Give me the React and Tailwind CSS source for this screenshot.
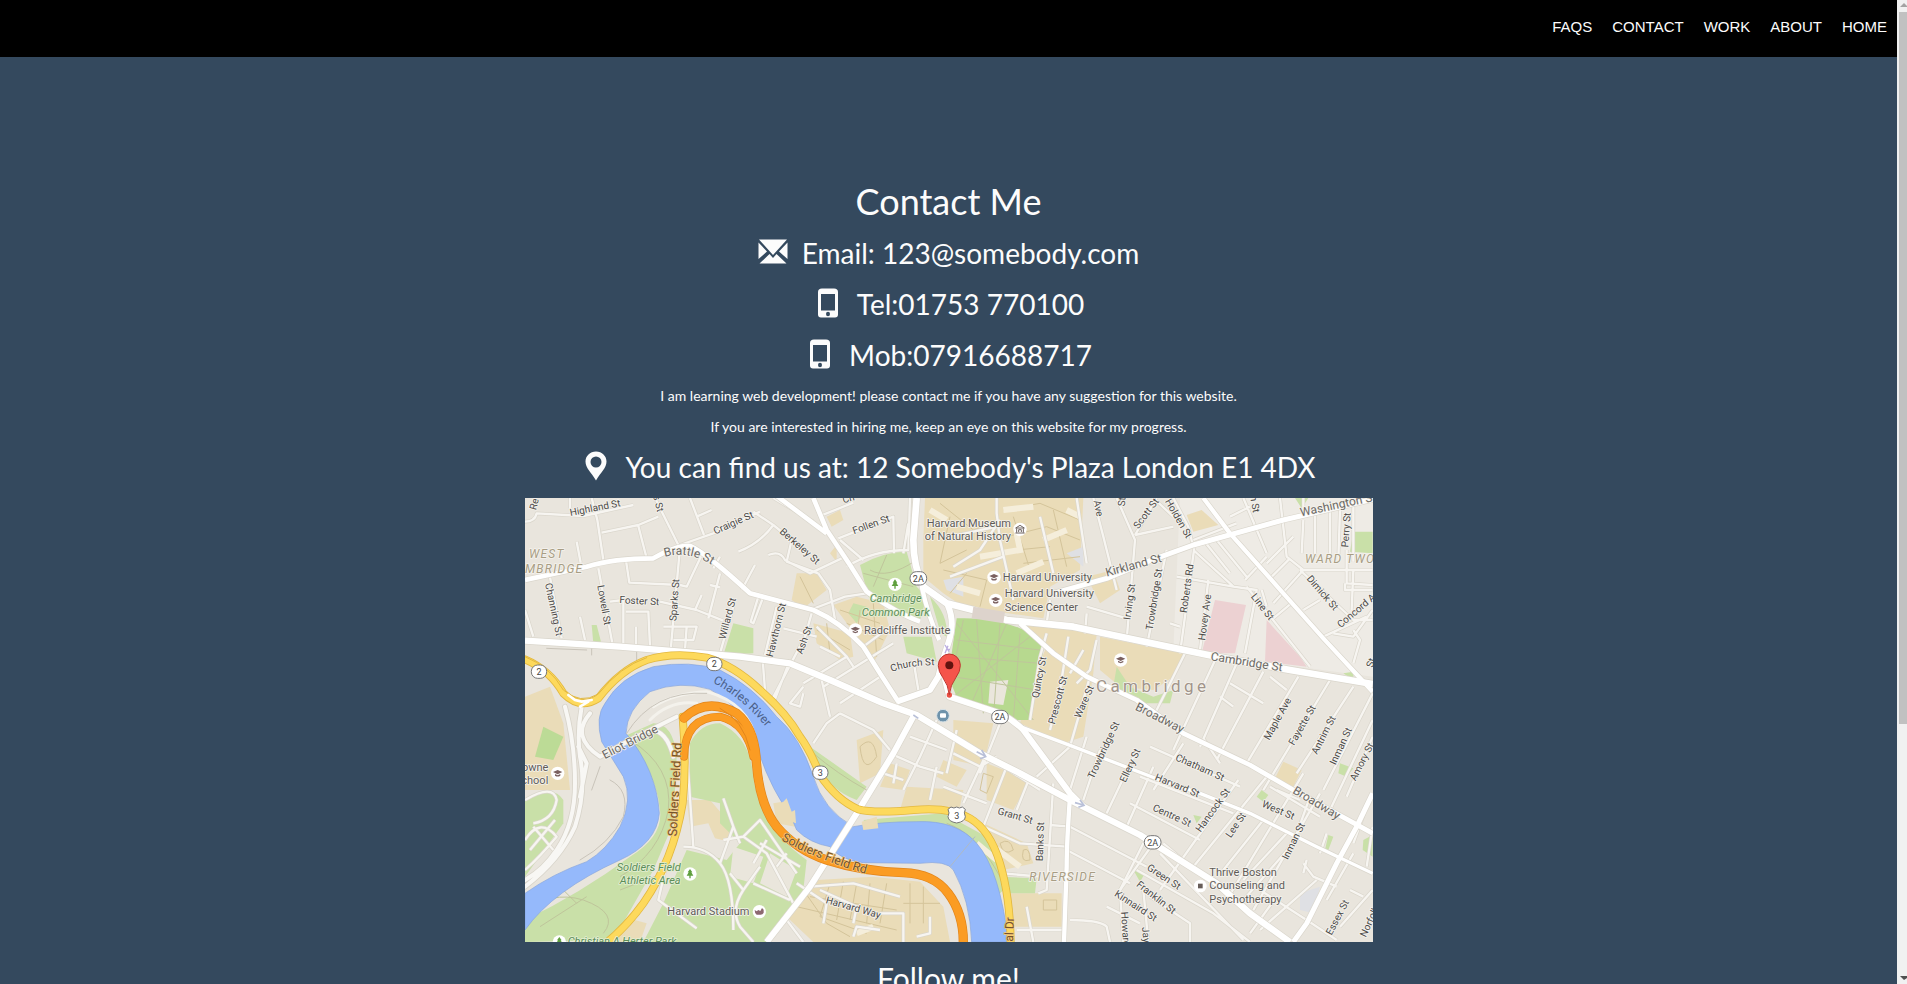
import React from "react";

const navItems = ["FAQS", "CONTACT", "WORK", "ABOUT", "HOME"];

const TAN = "#eadcb8";
const GREEN = "#c9e0a8";

function Envelope() {
  return (
    <svg viewBox="0 0 30 30" className="h-[30px] w-[30px] shrink-0 fill-[#fcfcfc]" aria-hidden="true">
      <path d="M1 2.500H29L15 18ZM0.500 5.500L9 14.500L0.500 22ZM29.500 5.500L21 14.500L29.500 22ZM11.500 17L15 21L18.500 17L28.500 26.500H1.500Z" />
    </svg>
  );
}

function Phone() {
  return (
    <svg viewBox="0 0 30 30" className="h-[30px] w-[30px] shrink-0 fill-[#fcfcfc]" aria-hidden="true">
      <path
        fillRule="evenodd"
        d="M9 0.500H21Q25 0.500 25 4V26.500Q25 29.500 22 29.500H8Q5 29.500 5 26.500V4Q5 0.500 9 0.500ZM8 6V22.500H22V6ZM15 23.800A2 2.200 0 1 0 15 28.200A2 2.200 0 1 0 15 23.800Z"
      />
    </svg>
  );
}

function Marker() {
  return (
    <svg viewBox="0 0 30 30" className="h-[30px] w-[30px] shrink-0 fill-[#fcfcfc]" aria-hidden="true">
      <path
        fillRule="evenodd"
        d="M15 0.500C21 0.500 25.500 5 25.500 10.500C25.500 17 20 21 15 29.500C10 21 4.500 17 4.500 10.500C4.500 5 9 0.500 15 0.500ZM15 5.500A5.500 5.500 0 1 0 15 16.500A5.500 5.500 0 1 0 15 5.500Z"
      />
    </svg>
  );
}

/* Street and place labels: [text, x, y, angle, size] around their centre. */
const streets = [
  ["Re", 42, 42, -75, 30],
  ["Highland St", 225, 53, -11, 30],
  ["s St", 416, 40, 75, 30],
  ["Craigie St", 640, 98, -24, 30],
  ["Channing St", 102, 358, 78, 30],
  ["Lowell St", 253, 345, 80, 30],
  ["Foster St", 358, 332, 3, 30],
  ["Sparks St", 463, 330, -86, 30],
  ["Willard St", 622, 385, -75, 30],
  ["Ch", 985, 25, -15, 30],
  ["Berkeley St", 840, 168, 41, 30],
  ["Follen St", 1053, 103, -20, 30],
  ["Hawthorn St", 768, 420, -76, 30],
  ["Ash St", 852, 450, -70, 30],
  ["Ave", 1736, 55, 78, 30],
  ["St", 1805, 35, -85, 30],
  ["Scott St", 1878, 70, -53, 30],
  ["Irving St", 1828, 335, -82, 30],
  ["Trowbridge St", 1902, 328, -81, 30],
  ["Quincy St", 1557, 562, -79, 30],
  ["Prescott St", 1613, 630, -75, 30],
  ["Ware St", 1692, 635, -66, 30],
  ["Holden St", 1976, 85, 60, 30],
  ["n St", 2205, 42, 80, 30],
  ["Perry St", 2478, 120, -86, 30],
  ["Dimick St", 2408, 308, 49, 30],
  ["Concord Ave", 2520, 352, -40, 30],
  ["Roberts Rd", 2000, 295, -82, 30],
  ["Hovey Ave", 2054, 382, -82, 30],
  ["Line St", 2228, 350, 52, 30],
  ["Maple Ave", 2272, 686, -61, 30],
  ["Fayette St", 2346, 705, -60, 30],
  ["Antrim St", 2410, 735, -63, 30],
  ["Inman St", 2462, 768, -65, 30],
  ["Amory St", 2525, 815, -63, 30],
  ["St", 2552, 518, -75, 30],
  ["Harvard Way", 1000, 1252, 16, 30],
  ["Grant St", 1486, 977, 16, 30],
  ["Banks St", 1560, 1055, -88, 30],
  ["Trowbridge St", 1750, 780, -65, 30],
  ["Ellery St", 1830, 826, -65, 30],
  ["Kinnaird St", 1848, 1247, 33, 30],
  ["Howard St", 1818, 1335, 86, 30],
  ["Jay St", 1880, 1352, 85, 30],
  ["Green St", 1932, 1160, 33, 30],
  ["Franklin St", 1909, 1222, 38, 30],
  ["Chatham St", 2040, 832, 24, 30],
  ["Harvard St", 1972, 886, 22, 30],
  ["Centre St", 1956, 976, 24, 30],
  ["Hancock St", 2078, 960, -54, 30],
  ["Lee St", 2147, 1005, -56, 30],
  ["West St", 2275, 960, 23, 30],
  ["Inman St", 2320, 1053, -64, 30],
  ["Essex St", 2452, 1282, -62, 30],
  ["Norfolk St", 2556, 1278, -65, 30],
];

const avenues = [
  ["Kirkland St", 1840, 225, -15, 36],
  ["Washington St", 2454, 43, -12, 36],
  ["Cambridge St", 2180, 515, 9, 36],
  ["Broadway", 1920, 683, 27, 36],
  ["Broadway", 2390, 938, 31, 36],
  ["Eliot Bridge", 330, 755, -27, 36],
];

/* Landmark names: [text, x, y, anchor]. */
const places = [
  ["Harvard Museum", 1473, 100, "end"],
  ["of Natural History", 1473, 139, "end"],
  ["Harvard University", 1448, 263, "start"],
  ["Harvard University", 1454, 311, "start"],
  ["Science Center", 1454, 351, "start"],
  ["Radcliffe Institute", 1032, 421, "start"],
  ["owne", 85, 832, "end"],
  ["chool", 85, 871, "end"],
  ["Harvard Stadium", 442, 1264, "start"],
  ["Thrive Boston", 2068, 1147, "start"],
  ["Counseling and", 2068, 1187, "start"],
  ["Psychotherapy", 2068, 1227, "start"],
];

const parks = [
  ["Cambridge", 1127, 325, "middle"],
  ["Common Park", 1127, 366, "middle"],
  ["Soldiers Field", 482, 1132, "end"],
  ["Athletic Area", 482, 1172, "end"],
  ["Christian A Herter Park", 143, 1354, "start"],
];

const minorRoads = [
  // north-west
  "M15 95 Q45 95 50 70 L190 78 L340 45 M150 24 V55 M215 24 L232 90 L250 210 M245 128 L355 105 L415 80 M355 108 L380 205 M405 24 L475 165 M510 24 L552 135 M530 80 L575 60 M480 165 L580 130 L720 65",
  "M170 155 L182 218 M235 235 L278 465 M90 262 L125 445 M15 360 L40 440 M180 380 L195 450 M318 212 L328 278 L480 285 L500 290 L545 195 M478 195 L452 480 M270 335 L310 330 L310 465 M318 365 H385 L390 470 M348 410 V465 M420 335 L530 360 L610 392 M430 410 H530 L520 450 H460 M500 410 L495 480",
  "M600 250 L565 385 M570 285 L600 292 M525 360 L545 315 M640 350 L600 490 M600 200 L580 235 M705 225 L665 300 M730 320 L700 400 L692 395 L715 320",
  "M700 65 L760 105 Q720 160 655 185 M760 105 L815 150 L800 215 L895 250 M745 195 Q780 180 795 210 L870 250 L965 205 M895 250 L930 300 L945 390",
  "M880 95 L760 24 M895 80 L1000 38 M955 145 L1120 80 L1122 190 M960 150 L1030 210 M980 230 Q1060 180 1165 180 L1170 24 M1165 100 L1150 190",
  "M870 360 L975 320 L1040 310 M875 370 L855 440 L750 640 M735 495 L770 350 M728 510 L735 600 M790 415 L890 440 M890 410 L980 500 L850 580 M900 470 L960 500 M810 510 L760 640 M850 590 L810 640 L840 650 L850 610 M905 570 L930 680 M980 500 L1000 530 M910 590 L1120 460 M960 640 L1080 560 M1180 510 L1195 600 M1030 470 L1110 410",
  // Harvard campus
  "M1430 24 V70 L1440 150 L1480 330 M1560 80 L1600 250 M1670 24 L1700 220 M1590 330 L1580 400 M1300 230 L1380 180 L1440 90 M1290 260 L1450 200 M1290 140 L1430 110",
  "M1720 24 L1750 140 L1790 300 M1790 24 L1845 150 L1820 450 M1845 135 L1910 24 M1845 135 L1960 110 M1700 350 L1820 385 M1700 370 L1695 430 M1900 24 L1960 80 M1940 180 L1880 470",
  "M1580 430 L1560 500 L1530 690 M1645 440 L1620 600 L1590 720 M1730 450 L1710 540 L1670 580 M1650 550 L1690 480 M1710 560 L1650 770 L1550 860",
  "M1960 24 L2005 110 L2022 180 L1980 490 M2020 150 L2150 100 M2020 180 L2130 280 L2140 290 L1970 260 M2050 150 L2130 250 M2090 150 L2180 260 M2065 270 L2040 480 M1950 400 L1980 410 M2140 290 L2210 300 L2175 490 M2180 290 L2370 530 M2175 270 L2240 200 M2225 300 L2240 350 M2170 24 L2240 190 M2190 50 L2130 80 M2280 24 L2300 200 L2350 240 L2260 340 M2240 220 L2320 140 M2310 205 L2250 265 M2340 240 H2558 M2350 24 V60 M2350 90 L2345 190 M2385 70 V200 M2430 60 V210 M2460 60 L2455 210 M2500 50 V215",
  "M2340 240 L2500 390 L2558 390 M2260 385 L2320 335 M2480 180 V280 L2558 285 M2475 280 V300 H2558 M2500 240 L2495 360 M2540 380 L2410 440 M2350 360 L2400 330 M2500 420 L2520 450 L2500 520 M2558 360 L2500 440 L2440 430",
  // east of the square
  "M1995 490 L1900 680 M2090 500 L1960 780 M2150 520 L2040 770 M2230 545 L2090 810 M2335 560 L2180 820 M2430 570 L2230 900 M2500 590 L2330 850 M2558 610 L2410 900 M2130 580 L2230 640 M2250 560 L2300 600 M2100 620 L2140 650 M1990 760 L1900 900 M2050 745 L2100 820 M2558 690 L2430 960 M2558 740 L2480 920",
  "M1890 770 L2160 890 M1860 860 L2140 970 M1830 940 L2040 1050 M2155 870 L1920 1200 M2240 860 L2020 1130 M2350 850 L2120 1230 M2370 920 L2320 1060 L2170 1230 M2230 990 L2110 1140 M2300 1030 L2170 1170 M2400 910 L2200 1260 M2350 1120 L2380 1160 L2450 1190 M2360 1110 L2350 1150 M2420 1030 L2400 1090 M2250 890 L2400 980 M2270 900 L2340 930 M2390 1170 L2220 1320 M2500 1090 L2420 1230 M2558 1010 L2540 1130 M2220 1200 L2360 1290 L2450 1350 M2460 1310 L2558 1200 M2490 1200 L2530 1220 M2500 1060 L2540 950",
  "M1900 1060 L1800 1200 M1920 1090 L2170 1350 M1850 1140 L2080 1270 L2190 1356 M1890 1220 L2010 1300 L2010 1356 M1760 1250 L1860 1300 M2190 1330 L2270 1220 M1930 1060 L2060 1170 M1650 1010 L1880 1130 M1640 1080 L1830 1180 M1590 1005 L1650 1010 M1650 1290 Q1740 1290 1760 1310 L1770 1356 M1800 1200 L1810 1356 M1870 1200 L1885 1356",
  // riverside
  "M1600 880 L1580 1200 L1555 1210 M1530 860 L1490 960 M1460 830 L1390 1010 M1450 830 L1560 900 M1400 790 L1330 940 M1310 720 L1280 850 M1440 700 L1380 850 M1300 790 L1380 830 L1430 800 M1390 1010 L1500 1060 L1640 1070 M1270 890 L1400 940 M1450 1150 L1560 1160 M1490 1320 H1640 M1520 1250 L1540 1356 M1700 740 L1650 900 M1740 780 L1690 930 M1850 780 L1760 970 M1900 830 L1820 1010 M1870 1060 L1800 1200",
  "M960 670 L920 700 L880 760 M960 670 L1060 720 L1110 780 M1250 690 L1200 800 L1150 900 M1170 740 L1280 780 M1110 790 L1200 830 L1270 850 M1090 850 L1150 870 M1130 820 L1120 880 M1250 830 L1230 930",
  // south-west
  "M15 1140 Q60 1100 110 1040 Q60 980 15 1050 M15 930 Q100 880 110 930 Q100 990 40 1000 M40 1010 L100 1080 M105 990 L30 1080",
  "M500 780 L520 1070 M610 925 L640 1010 L600 1120 M490 1070 Q560 1070 600 1120 Q640 1170 640 1320 M640 1010 L660 1060 M450 1080 L415 1230 L530 1315",
  "M610 1050 L670 1040 L720 990 L830 1150 M670 1040 L740 1090 L820 1240 M740 1050 L700 1120 M800 1090 L770 1130 M720 1060 L840 1130 M630 1150 L670 1200 L720 1130 M670 1200 Q630 1260 660 1310 L700 1356 M700 1180 L810 1230",
  "M830 1180 L920 1240 L910 1300 M900 1200 L1010 1250 L1000 1300 M870 1190 L1000 1180 L1140 1220 M800 1290 L850 1356 M1080 1270 H1150 V1356 M1230 1280 V1330 L1190 1340 M1000 1340 L1010 1310 L1080 1320",
];

const majorRoads = [
  ["M15 270 L200 230 Q280 205 400 205 Q470 165 510 168 Q560 190 690 310 L880 360 Q960 395 1030 470 L1080 550 L1135 635", 14],
  ["M760 10 L920 130 M880 24 L920 120 L990 225 L1040 305 Q1130 370 1200 395", 14],
  ["M1600 310 L1760 265 L1890 212 L2020 165 L2290 90 L2558 28", 15],
  ["M2050 24 L2130 130 L2290 310 L2410 445 L2558 605", 13],
  ["M1500 400 L1600 490 L1700 560 L1850 630 L1990 730 L2190 825 L2320 900 L2558 1030", 14],
  ["M1500 710 L1660 770 L1920 870 L2040 910 L2190 970 L2390 1070 L2558 1150", 10],
  ["M2558 910 L2510 1010 L2450 1120 L2360 1300 L2320 1356", 15],
  ["M1650 920 Q1640 1060 1640 1130 L1632 1356", 13],
  ["M1180 680 L1120 790 L1010 970 L870 1190 L740 1356", 18],
  ["M15 452 L300 470 L660 500 L810 520 L930 570 L1090 640 L1190 675 L1290 735 L1380 790 L1500 850 L1650 930 L1860 1035 L2090 1180 L2190 1270 L2310 1356", 19],
  ["M1190 24 L1180 150 Q1180 230 1210 290 L1280 340 L1360 360 L1460 390 L1660 410 L1920 465 L2090 500 L2310 540 L2558 582", 20],
  ["M1205 290 Q1225 380 1258 450", 13],
  ["M1283 345 Q1305 395 1288 450 Q1265 520 1255 560 L1230 600 L1130 635 M1268 540 L1288 620 L1440 670 Q1480 690 1510 720 L1650 910 L1690 950", 18],
];

const paths = {
  yellow:
    "M15 508 Q90 540 130 610 Q180 660 235 625 Q300 540 380 510 Q460 485 560 503 Q640 525 720 600 Q800 670 840 740 Q870 780 900 855 Q950 930 1015 958 Q1060 970 1180 960 Q1290 950 1350 985 Q1410 1020 1440 1120 Q1470 1220 1472 1356",
  yellowSouth: "M488 680 Q500 820 488 940 Q460 1110 370 1240 Q320 1310 255 1362",
  orange:
    "M492 684 Q560 620 650 670 Q700 710 708 800 Q715 940 770 1010 Q830 1080 920 1110 Q1030 1145 1150 1148 Q1240 1150 1285 1210 Q1330 1270 1330 1356",
  orangeLoop: "M492 800 Q495 680 600 680 Q680 700 700 800",
};

function Shield({ x, y, label }) {
  const w = label.length > 1 ? 50 : 46;
  return (
    <g>
      <rect x={x - w / 2} y={y - 20} width={w} height={40} rx={19} fill="#fff" stroke="#777" strokeWidth={3} />
      <text x={x} y={y + 10} fontSize={27} fill="#444" textAnchor="middle">{label}</text>
    </g>
  );
}

function School({ x, y }) {
  return (
    <g transform={`translate(${x} ${y})`}>
      <circle r={20} fill="#fff" />
      <path d="M-14 -4L0 -10L14 -4L0 3ZM-8 2L0 6L8 2V7Q0 12 -8 7ZM11 -2V8" fill="#7b6160" />
    </g>
  );
}

function Tree({ x, y }) {
  return (
    <g transform={`translate(${x} ${y})`}>
      <circle r={20} fill="#fff" />
      <path d="M0 -15L7 -5H4L10 5H2V13H-2V5H-10L-4 -5H-7Z" fill="#5f9f3e" />
    </g>
  );
}

function Label({ item }) {
  const [text, x, y, angle, size] = item;
  return (
    <text transform={`translate(${x} ${y}) rotate(${angle})`} y={size * 0.35} fontSize={size} textAnchor="middle">
      {text}
    </text>
  );
}

function CityMap() {
  return (
    <svg
      viewBox="15 24 2544 1332"
      role="img"
      aria-label="Map of Cambridge"
      className="mt-3.5 block h-auto w-[848px] max-w-full font-['Roboto',sans-serif]"
    >
      <defs>
        <path id="brattle" d="M434 201 Q505 180 578 226" />
        <path id="charles" d="M578 578 Q680 630 765 745" />
        <path id="church" d="M1116 546 Q1165 525 1245 526" />
        <path id="soldiers" d="M783 1050 Q900 1115 1075 1162" />
      </defs>

      <rect x={15} y={24} width={2544} height={1332} fill="#e9e5dd" />
      <path d="M1980 24H2559V560L1960 480Z" fill="#eeebe5" />

      {/* campus grounds */}
      <g fill={TAN}>
        <path d="M1215 24H1690L1680 240L1590 290L1570 385L1330 350L1270 310L1210 260V150Z" />
        <path d="M1510 400L1730 430L1720 550L1690 740L1630 760L1500 700L1540 560L1580 470Z" />
        <path d="M1740 440L1990 490L1960 560L1900 600L1800 590L1740 540Z" />
        <path d="M1700 260L1780 240L1800 300L1740 340Z" />
        <path d="M830 250L890 250L920 300L850 355L815 330ZM940 345L1010 320L1090 340L1110 420L1060 520L1010 440ZM880 400L990 430L1000 500L960 510L890 460ZM920 80L960 60L970 90L935 110ZM930 190L950 165V215Z" />
        <path d="M15 620L90 590L130 700L150 900H15Z" />
        <path d="M2000 75L2045 60L2095 105L2020 125ZM2290 815L2345 840L2320 890L2265 865Z" />
        <path d="M500 930H570L630 1000V1055L585 1045L565 1000L510 1010Z" />
        <path d="M325 1285L380 1300L360 1356H290Z" />
        <path d="M890 1170L1060 1160L1200 1175L1270 1250L1290 1356H880L800 1280Z" />
        <path d="M1010 750L1090 720L1080 850L1020 880ZM1160 890L1330 900L1320 950L1140 960ZM1110 820L1170 840L1150 900L1080 890ZM1300 690L1420 700L1390 830L1300 810ZM1270 810L1340 840L1310 890L1250 860ZM1400 820L1530 870L1480 960L1400 930ZM1390 1000L1520 1060L1540 1120L1450 1140ZM1460 1210H1625V1310H1470Z" />
        <path d="M760 940L820 930L825 1010L770 1000Z" />
      </g>

      {/* parks */}
      <g fill={GREEN}>
        <path d="M1020 225Q1090 185 1160 185L1190 290L1220 320L1200 390L1130 370L1045 320Z" />
        <path d="M1310 385Q1460 380 1545 440L1570 480L1530 690L1460 690L1310 620L1285 560Z" fill="#b7d98f" />
        <path d="M1230 320Q1285 370 1280 440L1262 430ZM1150 440H1235L1250 515L1160 490ZM1000 340L1040 350L1010 400L985 370Z" />
        <path d="M640 400L700 415V490L610 495ZM215 405L230 405L243 455L220 460Z" />
        <path d="M2325 24H2365L2345 55ZM2500 125L2558 125V190L2490 185ZM2460 820L2500 835L2480 860L2455 850ZM2225 900L2245 915L2230 935L2210 920ZM2425 1035L2440 1040L2425 1080H2415ZM2530 1050L2558 1035V1100L2528 1080ZM2020 975L2045 980L2030 1000ZM2470 550L2500 545L2500 570ZM1790 530L1830 590L1900 620L1960 600L1950 640L1850 640L1780 590ZM1840 1140L1875 1150L1860 1175ZM1440 1160L1550 1165L1545 1210H1465Z" />
        <path d="M70 710L130 740L100 810L45 800Z" fill="#bcdb96" />
        <path d="M15 930Q100 880 130 930V1000L15 1160Z" />
        <path d="M310 740L400 700Q460 700 470 800L460 1000L400 1140L280 1350L15 1356V1290Q180 1210 330 1100Q430 1040 420 960Q410 850 325 760Z" />
        <path d="M510 760Q540 700 600 700Q690 740 700 860Q720 1010 860 1110L850 1200L740 1356H370L430 1240L500 1080L620 1110L660 1060L600 1000L600 940L510 920Z" />
        <path d="M870 770L1040 890L1010 930Q930 900 900 830ZM1030 990L1270 970L1400 1040L1470 1180L1430 1220Q1380 1020 1260 1000L1050 1010Z" />
      </g>
      <path d="M2085 330L2178 345L2145 490H2045ZM2240 390L2340 500L2360 530L2235 515Z" fill="#ecd1d2" />
      <path d="M2340 1210L2400 1190L2380 1270L2340 1260ZM1270 270L1330 260V320L1280 300ZM1640 190L1690 170V230Z" fill="#dfe0e4" />
      <path d="M640 1070L730 1100L700 1180L630 1160ZM750 1090L830 1140L800 1220L720 1180ZM1410 575L1465 570L1450 645L1405 640Z" fill="#eae6dc" />

      {/* garden and campus footpaths */}
      <g fill="none" stroke="#bfc59b" strokeWidth={3}>
        <path d="M1310 400L1540 690M1530 440L1300 620M1310 500L1560 520M1300 560L1550 600M1370 390L1390 670M1440 400L1420 690M1500 430L1480 690M1310 450L1560 480M1330 390L1300 540M1460 400L1350 650" />
        <path d="M1030 250L1180 290M1100 195L1060 290M1050 240Q1100 270 1190 210" />
        <path d="M330 750Q460 830 445 960Q420 1090 300 1160M15 1270Q90 1200 190 1230Q300 1270 250 1330M170 1240L120 1190M60 1310L200 1220M430 1150L300 1200" />
        <path d="M880 790Q950 850 1040 900M1280 1000Q1370 1030 1440 1160" />
      </g>
      <g fill="none" stroke="#d4c49a" strokeWidth={3}>
        <path d="M1260 40L1360 120L1420 100M1290 80L1260 220L1340 180M1450 60L1560 40L1680 90M1460 140L1580 110L1680 150M1490 180L1590 170M1510 220L1680 200M1480 80L1530 240M1600 60L1640 230M1270 240L1400 270L1380 350M1340 250L1290 310" />
        <path d="M850 1200L920 1300L990 1340M930 1180L900 1280L1040 1330M970 1175L950 1290M1010 1180L990 1290M1050 1180L1040 1300M1100 1180L1080 1300M830 1250L1130 1320M870 1220L1130 1260M1150 1240H1260M1170 1180V1300M1210 1190V1300" />
        <path d="M840 260L880 340M960 360L1080 400M980 400L1090 450M1020 360L1010 440M1060 340L1070 500M890 420L990 480M920 400L930 490" />
        <path d="M1020 770Q1060 730 1070 800Q1030 860 1020 770M1390 850L1420 860L1400 910L1380 900ZM1440 1060Q1470 1040 1480 1080Q1450 1100 1440 1060M1510 1080Q1530 1070 1530 1110Q1500 1120 1510 1080M1570 1230V1260H1610V1230Z" />
      </g>
      <g fill="none" stroke="#f5eedb" strokeWidth={18}>
        <path d="M1450 60L1540 50M1380 200L1500 180L1490 130M1570 150L1640 120M1490 250L1570 215M1230 60L1280 90M1640 60L1680 80M1310 290L1380 310" />
        <path d="M1420 1070L1500 1130M1370 1060L1430 1110M1010 1330L1060 1310" />
      </g>

      {/* river */}
      <path
        d="M15 1210Q100 1150 200 1115Q260 1080 300 1010Q340 930 310 860L245 755Q225 680 255 640Q300 560 400 530Q510 510 600 540Q700 590 770 680Q840 740 880 860Q910 960 1000 1010Q1080 995 1190 995Q1310 990 1370 1060Q1440 1140 1465 1356H1355Q1350 1230 1300 1140Q1280 1110 1200 1120L1030 1118Q960 1110 930 1070Q870 1060 830 1020Q810 970 790 945Q730 850 700 730Q650 640 570 598Q480 570 390 605Q320 660 318 730Q410 840 418 970Q410 1060 300 1110Q100 1200 15 1320Z"
        fill="#95b9fb"
        stroke="#86a5dc"
        strokeWidth={2}
      />
      <path d="M765 945L790 935L800 925L815 965L825 960L828 1000L800 990ZM1025 995L1070 980L1075 1015L1030 1020Z" fill={TAN} />
      <path d="M1290 1130L1365 1040" stroke="#aeb9c6" strokeWidth={3} fill="none" />

      {/* interchange at the bridge */}
      <g fill="none" strokeLinecap="round" strokeLinejoin="round">
        <path d="M135 650Q165 760 165 880Q165 1000 110 1080Q70 1140 15 1170M185 650Q170 730 180 800Q200 900 165 1010Q120 1110 15 1190M210 670Q150 740 240 800L330 750L470 680M175 770L200 820L180 920M390 720Q440 720 460 800" stroke="#d8d4ca" strokeWidth={17} />
        <path d="M135 650Q165 760 165 880Q165 1000 110 1080Q70 1140 15 1170M185 650Q170 730 180 800Q200 900 165 1010Q120 1110 15 1190M210 670Q150 740 240 800L330 750L470 680M175 770L200 820L180 920M390 720Q440 720 460 800" stroke="#f8f7f4" strokeWidth={12} />
        <path d="M400 650Q460 610 560 605Q690 640 710 760M390 690Q450 630 530 640" stroke="#f4f2ec" strokeWidth={9} />
        <path d="M270 870Q330 900 310 980Q270 1060 180 1110M215 900L240 830M320 730Q400 600 560 610M80 475L200 480M215 455V495M350 465V515" stroke="#c9c4ba" strokeWidth={3} />
      </g>

      {/* streets */}
      <g fill="none" strokeLinejoin="round">
        <g stroke="#dad6cc" strokeWidth={11}>
          {minorRoads.map((d) => <path key={d} d={d} />)}
        </g>
        <g stroke="#f7f5f1" strokeWidth={7}>
          {minorRoads.map((d) => <path key={d} d={d} />)}
        </g>
        <g stroke="#dad6cc">
          {majorRoads.map(([d, w]) => <path key={d} d={d} strokeWidth={w + 4} />)}
        </g>
        <g stroke="#ffffff">
          {majorRoads.map(([d, w]) => <path key={d} d={d} strokeWidth={w} />)}
        </g>
      </g>
      <path d="M1360 350L1455 365L1450 400L1355 385Z" fill="#ddd3cc" />
      <g fill="none" stroke="#b9c0d8" strokeWidth={5}>
        <path d="M1370 785L1395 798M1385 780L1397 800L1380 806M1665 938L1690 945M1680 930L1692 946L1675 952M1180 675L1195 685" />
      </g>

      {/* highways */}
      <g fill="none" strokeLinecap="round">
        <g stroke="#e2b840" strokeWidth={24}>
          <path d={paths.yellow} />
          <path d={paths.yellowSouth} />
        </g>
        <g stroke="#fdd95c" strokeWidth={19}>
          <path d={paths.yellow} />
          <path d={paths.yellowSouth} />
        </g>
        <path d="M15 500Q90 530 130 600Q180 645 235 612Q300 530 380 503" stroke="#e2b840" strokeWidth={3} />
        <path d="M145 615L165 630L185 635L215 630M180 650L205 635" stroke="#fff" strokeWidth={8} />
        <g stroke="#e1851c" strokeWidth={28}>
          <path d={paths.orange} />
          <path d={paths.orangeLoop} strokeWidth={24} />
        </g>
        <g stroke="#fb9c23" strokeWidth={24}>
          <path d={paths.orange} />
          <path d={paths.orangeLoop} strokeWidth={20} />
        </g>
        <path d="M600 655Q670 690 690 780" stroke="#e1851c" strokeWidth={3} />
      </g>

      {/* names */}
      <g fill="#4c4a48" stroke="#f5f3ee" strokeWidth={5} strokeLinejoin="round" className="[paint-order:stroke]">
        {streets.map((s, i) => <Label key={i} item={s} />)}
        <g fill="#6b6864">
          {avenues.map((s, i) => <Label key={i} item={s} />)}
          <text fontSize={36}><textPath href="#brattle">Brattle St</textPath></text>
        </g>
        <text fontSize={30}><textPath href="#church">Church St</textPath></text>
        <g fontSize={33} fill="#605b57">
          {places.map(([t, x, y, a]) => <text key={t + y} x={x} y={y + 11} textAnchor={a}>{t}</text>)}
        </g>
        <g fontSize={33} fill="#5c8d58" fontStyle="italic" stroke="#e3efd3">
          {parks.map(([t, x, y, a]) => <text key={t} x={x} y={y + 11} textAnchor={a}>{t}</text>)}
        </g>
        <g fill="#a89d84" fontStyle="italic" fontSize={36} className="tracking-widest">
          <text x={27} y={205}>WEST</text>
          <text x={15} y={249}>MBRIDGE</text>
          <text x={2355} y={219}>WARD TWO</text>
          <text x={1528} y={1173}>RIVERSIDE</text>
        </g>
        <text x={1728} y={605} fontSize={51} fill="#a1948a" className="tracking-[0.2em]">Cambridge</text>
      </g>
      <text fontSize={36} fill="#4a5f88"><textPath href="#charles">Charles River</textPath></text>
      <g fill="#74532d" fontSize={37} stroke="#f6c97c" strokeWidth={4} className="[paint-order:stroke]">
        <text><textPath href="#soldiers">Soldiers Field Rd</textPath></text>
        <Label item={["Soldiers Field Rd", 464, 898, -87, 38]} />
        <Label item={["al Dr", 1468, 1318, -88, 36]} />
      </g>

      {/* symbols */}
      <Shield x={57} y={545} label="2" />
      <Shield x={583} y={522} label="2" />
      <Shield x={1195} y={265} label="2A" />
      <Shield x={1440} y={681} label="2A" />
      <Shield x={901} y={848} label="3" />
      <Shield x={1898} y={1057} label="2A" />
      <path d="M1284 958L1293 951Q1302 957 1310 951Q1318 957 1327 951L1336 958Q1330 968 1336 980Q1335 995 1310 999Q1285 995 1284 980Q1290 968 1284 958Z" fill="#fff" stroke="#777" strokeWidth={3} />
      <text x={1310} y={986} fontSize={27} fill="#444" textAnchor="middle">3</text>
      <School x={1422} y={262} />
      <School x={1427} y={331} />
      <School x={1006} y={420} />
      <School x={1802} y={510} />
      <School x={113} y={850} />
      <Tree x={1125} y={283} />
      <Tree x={510} y={1152} />
      <Tree x={118} y={1356} />
      <g transform="translate(1500 118)">
        <circle r={20} fill="#fff" />
        <path d="M-13 -4L0 -12L13 -4ZM-10 -3V10M10 -3V10M-14 11H14M-4 8V1H4V8" fill="none" stroke="#6d6260" strokeWidth={3} />
      </g>
      <g transform="translate(718 1265)">
        <circle r={20} fill="#fff" />
        <path d="M-14 -5L-8 -1L-3 -5L3 -2L8 -11L13 -6L13 3Q10 9 4 9H-8Q-14 6 -14 -5Z" fill="#8c6870" />
      </g>
      <circle cx={2041} cy={1188} r={19} fill="#fff" />
      <rect x={2034} y={1181} width={14} height={14} fill="#675d59" />
      <circle cx={1269} cy={677} r={19} fill="#6f93ab" stroke="#dbe4e8" strokeWidth={3} />
      <rect x={1260} y={670} width={18} height={13} rx={3} fill="#fff" />
      <path d="M1275 465L1287 485M1284 467L1275 490M1278 478H1290" stroke="#bcaee0" strokeWidth={4} />

      <circle cx={1288} cy={615} r={8} fill="#ea5044" />
      <path d="M1288 614Q1285 585 1268 562Q1255 545 1255 526A33 34 0 0 1 1321 526Q1321 545 1308 562Q1291 585 1288 614Z" fill="#f5544b" stroke="#bd352e" strokeWidth={3} />
      <circle cx={1288} cy={526} r={12} fill="#61130f" />
    </svg>
  );
}

function Row({ icon, className, children }) {
  return (
    <h2 className={`flex items-start gap-3.5 text-[28px] leading-[33px] ${className}`}>
      {icon}
      <span>{children}</span>
    </h2>
  );
}

function Scrollbar() {
  return (
    <div className="flex w-2.5 shrink-0 flex-col items-end bg-[#f1f1f1]" aria-hidden="true">
      <svg viewBox="0 0 8 12" className="h-3 w-2 fill-[#a3a3a3]"><path d="M1 7L5 3L8 6V7Z" /></svg>
      <div className="w-2 grow-[712] bg-[#c1c1c1]" />
      <div className="grow-[248]" />
      <svg viewBox="0 0 8 12" className="h-3 w-2 fill-[#505050]"><path d="M1 4H8V6L5 8Z" /></svg>
    </div>
  );
}

export default function App() {
  return (
    <div className="flex h-screen overflow-hidden bg-[#34495e]">
      <div className="min-w-0 flex-1 overflow-hidden">
        <header className="bg-black px-2.5 pt-[17px] pb-5">
          <nav className="flex justify-end gap-5 font-['Liberation_Sans',sans-serif] text-[15px] leading-5 text-[#fcfcfc]">
            {navItems.map((item) => (
              <a key={item} href={`#${item.toLowerCase()}`}>{item}</a>
            ))}
          </nav>
        </header>
        <main className="flex flex-col items-center pt-[124px] text-center font-['Lato',sans-serif] text-[#fcfcfc]">
          <h1 className="text-4xl leading-10">Contact Me</h1>
          <Row className="mt-4" icon={<Envelope />}>Email: 123@somebody.com</Row>
          <Row className="mt-[18px]" icon={<Phone />}>Tel:01753 770100</Row>
          <Row className="mt-[18px]" icon={<Phone />}>Mob:07916688717</Row>
          <p className="mt-3.5 text-sm leading-5">
            I am learning web development! please contact me if you have any suggestion for this website.
          </p>
          <p className="mt-[11px] text-sm leading-5">
            If you are interested in hiring me, keep an eye on this website for my progress.
          </p>
          <Row className="mt-3.5" icon={<Marker />}>You can find us at: 12 Somebody's Plaza London E1 4DX</Row>
          <CityMap />
          <h2 className="mt-5 text-[30px] leading-[33px]">Follow me!</h2>
        </main>
      </div>
      <Scrollbar />
    </div>
  );
}
